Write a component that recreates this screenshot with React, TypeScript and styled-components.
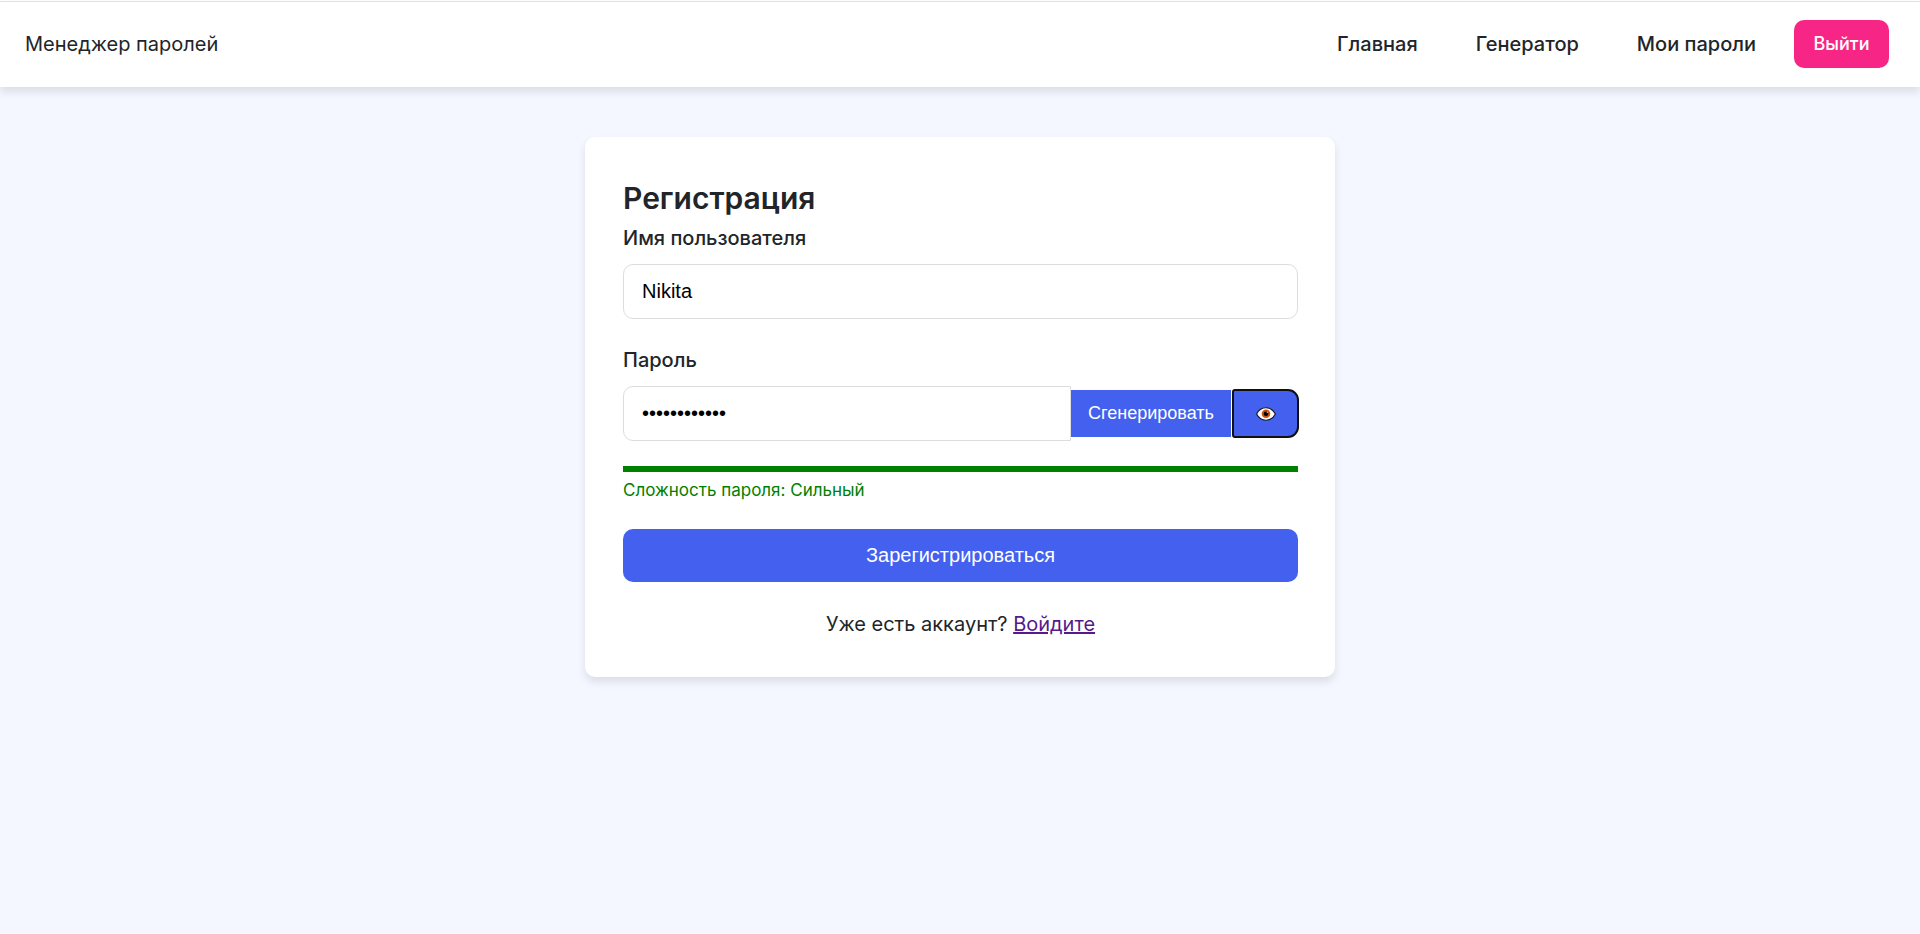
import React, { useState } from 'react';
import styled, { createGlobalStyle } from 'styled-components';

const GlobalStyle = createGlobalStyle`
  * { box-sizing: border-box; }
  body {
    margin: 0;
    background: #f4f7ff;
    color: #212529;
    font-family: Inter, "Liberation Sans", sans-serif;
    font-size: 20px;
    line-height: 32px;
  }
`;

const TopRule = styled.div`
  padding-top: 1px;
  background: #fff;
`;

const Header = styled.header`
  display: flex;
  align-items: center;
  justify-content: space-between;
  min-height: 86px;
  padding: 17px 31px 19px 25px;
  background: #fff;
  border-top: 1px solid #dee2e6;
  box-shadow: 0 5px 8px rgba(0, 0, 0, 0.1);
`;

const Brand = styled.div`
  font-size: 20px;
`;

const Nav = styled.nav`
  display: flex;
  align-items: center;
  gap: 38px;
`;

const Links = styled.div`
  display: flex;
  gap: 58px;
`;

const NavLink = styled.a`
  color: #212529;
  font-weight: 500;
  text-decoration: none;
`;

const Button = styled.button`
  border: none;
  background: #4361ee;
  color: #fff;
  font-family: "Liberation Sans", Arial, sans-serif;
  cursor: pointer;
`;

const LogoutButton = styled(Button)`
  width: 95px;
  height: 48px;
  padding: 0;
  border-radius: 10px;
  background: #f72585;
  font-family: Inter, sans-serif;
  font-size: 18px;
  font-weight: 500;
`;

const Card = styled.main`
  max-width: 750px;
  margin: 50px auto;
  padding: 37px 37px 37px 38px;
  border-radius: 10px;
  background: #fff;
  box-shadow: 0 5px 8px rgba(0, 0, 0, 0.1);
`;

const Title = styled.h2`
  margin: 0;
  font-size: 30px;
  line-height: 48px;
  font-weight: 600;
`;

const Field = styled.div`
  margin-bottom: 25px;
`;

const Label = styled.label`
  display: block;
  margin-bottom: 10px;
  font-weight: 500;
`;

const Input = styled.input<{ $joined?: boolean }>`
  display: block;
  flex: 1;
  width: 100%;
  min-width: 0;
  height: 55px;
  padding: 0 18px;
  border: 1px solid #dddddd;
  border-radius: ${(p) => (p.$joined ? '10px 0 0 10px' : '10px')};
  background: #fff;
  color: #000;
  font-family: "Liberation Sans", Arial, sans-serif;
  font-size: 20px;
  outline: none;
`;

const PasswordRow = styled.div`
  display: flex;
  align-items: center;
`;

const GenerateButton = styled(Button)`
  width: 160px;
  height: 47px;
  padding: 0;
  font-size: 18px;
`;

const EyeButton = styled(Button)`
  display: flex;
  align-items: center;
  justify-content: center;
  width: 65px;
  height: 47px;
  margin-left: 2px;
  padding: 0;
  border-radius: 2px 10px 10px 2px;
  outline: 2px solid #101010;
  outline-offset: -1px;
`;

const StrengthBar = styled.div`
  height: 6px;
  background: #008000;
`;

const StrengthText = styled.div`
  margin: 2px 0 23px;
  color: #008000;
  font-size: 17px;
`;

const SubmitButton = styled(Button)`
  display: block;
  width: 100%;
  height: 53px;
  border-radius: 10px;
  font-size: 20px;
`;

const Footer = styled.p`
  margin: 26px 0 0;
  text-align: center;
`;

const LoginLink = styled.a`
  color: #551a8b;
`;

const links = ['Главная', 'Генератор', 'Мои пароли'];

function EyeIcon() {
  return (
    <svg width="20" height="14" viewBox="0 0 20 14" aria-hidden="true">
      <path
        d="M.6 7C2.6 3.2 6 .8 10 .8S17.4 3.2 19.4 7C17.4 10.8 14 13.2 10 13.2S2.6 10.8.6 7Z"
        fill="#fff"
        stroke="#111"
        strokeWidth="1.1"
      />
      <circle cx="10" cy="6.8" r="4.3" fill="#ca5010" />
      <circle cx="10" cy="6.8" r="2.3" fill="#000" />
      <circle cx="11.3" cy="5.2" r=".7" fill="#f5c9a8" />
    </svg>
  );
}

export default function App() {
  const [name, setName] = useState('Nikita');
  const [password, setPassword] = useState('Qw7!kLp2#xZ9');
  const [visible, setVisible] = useState(false);

  return (
    <>
      <GlobalStyle />
      <TopRule>
        <Header>
          <Brand>Менеджер паролей</Brand>
          <Nav>
            <Links>
              {links.map((text) => (
                <NavLink key={text} href="#">{text}</NavLink>
              ))}
            </Links>
            <LogoutButton type="button">Выйти</LogoutButton>
          </Nav>
        </Header>
      </TopRule>
      <Card>
        <Title>Регистрация</Title>
        <form onSubmit={(e) => e.preventDefault()}>
          <Field>
            <Label htmlFor="username">Имя пользователя</Label>
            <Input id="username" value={name} onChange={(e) => setName(e.target.value)} />
          </Field>
          <Field>
            <Label htmlFor="password">Пароль</Label>
            <PasswordRow>
              <Input
                id="password"
                $joined
                type={visible ? 'text' : 'password'}
                value={password}
                onChange={(e) => setPassword(e.target.value)}
              />
              <GenerateButton type="button">Сгенерировать</GenerateButton>
              <EyeButton type="button" aria-label="Показать пароль" onClick={() => setVisible(!visible)}>
                <EyeIcon />
              </EyeButton>
            </PasswordRow>
          </Field>
          <StrengthBar />
          <StrengthText>Сложность пароля: Сильный</StrengthText>
          <SubmitButton type="submit">Зарегистрироваться</SubmitButton>
        </form>
        <Footer>
          Уже есть аккаунт? <LoginLink href="#">Войдите</LoginLink>
        </Footer>
      </Card>
    </>
  );
}
